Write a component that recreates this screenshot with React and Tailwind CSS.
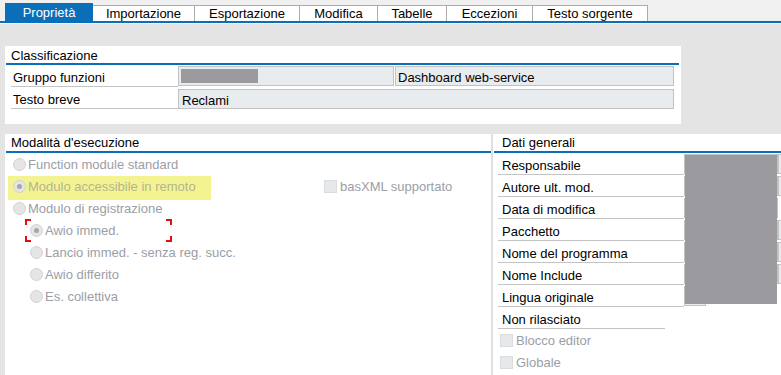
import React from "react";

const tabs = [
  { label: "Proprietà", w: "w-[88px]", active: true },
  { label: "Importazione", w: "w-[102px]" },
  { label: "Esportazione", w: "w-[105px]" },
  { label: "Modifica", w: "w-[78px]" },
  { label: "Tabelle", w: "w-[69px]" },
  { label: "Eccezioni", w: "w-[86px]" },
  { label: "Testo sorgente", w: "w-[115px]" },
];

function Radio({ checked }) {
  return (
    <span className="flex h-[13px] w-[13px] shrink-0 items-center justify-center rounded-full border border-[#d2d2d2] bg-[#e5e5e5]">
      {checked && <span className="h-[5px] w-[5px] rounded-full bg-[#a6a6a6]" />}
    </span>
  );
}

function Check() {
  return <span className="h-[13px] w-[13px] shrink-0 border border-[#dcdcdc] bg-[#e6e9ec]" />;
}

function RadioRow({ label, checked, indent }) {
  return (
    <div className={`flex h-[22px] items-center ${indent ? "pl-[25px]" : "pl-[8px]"}`}>
      <Radio checked={checked} />
      <span className="ml-[2px] text-[#9c9ea6]">{label}</span>
    </div>
  );
}

function InfoRow({ label, wide, extra }) {
  return (
    <div className="flex h-[22px]">
      <div className="ml-[5px] flex w-[186px] shrink-0 items-center border-b border-[#c4c4c4] pl-[4px] pt-[3px] text-black">
        {label}
      </div>
      <div
        className={`mt-[1px] h-[20px] shrink-0 border border-[#c2c2c2] bg-[#e9ecef] ${wide ? "w-[94px]" : "w-[22px]"}`}
      />
      {extra && <div className="mt-[1px] h-[20px] w-[20px] shrink-0 border border-[#c2c2c2] bg-[#e9ecef]" />}
    </div>
  );
}

export default function App() {
  return (
    <div
      className="h-[375px] w-[781px] overflow-hidden bg-[#e4e4e4] text-[13px] leading-none"
      style={{ fontFamily: '"Liberation Sans", Arial, sans-serif' }}
    >
      {/* Tab strip */}
      <div className="flex h-[21px] items-end bg-[#f0f0f0] pl-[5px]">
        {tabs.map((t) =>
          t.active ? (
            <div key={t.label} className={`flex h-[18px] items-center justify-center bg-[#0a6fb8] text-white ${t.w}`}>
              {t.label}
            </div>
          ) : (
            <div
              key={t.label}
              className={`flex h-[16px] items-center justify-center border-t border-r border-[#ababab] bg-white text-black ${t.w}`}
            >
              {t.label}
            </div>
          )
        )}
      </div>
      <div className="h-[2px] bg-[#0a6fb8]" />
      <div className="h-[1px] bg-[#f4f4f4]" />

      {/* Classificazione */}
      <div className="ml-[5px] mt-[22px] h-[78px] w-[676px] bg-white">
        <div className="flex h-[17px] items-center pl-[6px] pt-[1px] text-black">Classificazione</div>
        <div className="ml-[1px] mr-[2px] h-[2px] bg-[#0a6fb8]" />
        <div className="flex h-[22px]">
          <div className="ml-[6px] flex w-[167px] shrink-0 items-center border-b border-[#c4c4c4] pl-[2px] pt-[3px] text-black">
            Gruppo funzioni
          </div>
          <div className="mt-[1px] h-[20px] w-[216px] shrink-0 border border-[#c2c2c2] bg-[#e9ecef] pl-[2px] pt-[2px]">
            <div className="h-[14px] w-[77px] bg-[#9b9a9f]" />
          </div>
          <div className="ml-[1px] mt-[1px] flex h-[20px] w-[279px] shrink-0 items-center border border-[#c2c2c2] bg-[#e9ecef] pl-[2px] pt-[2px] text-black">
            Dashboard web-service
          </div>
        </div>
        <div className="flex h-[22px]">
          <div className="ml-[6px] flex w-[167px] shrink-0 items-center border-b border-[#c4c4c4] pl-[2px] pt-[3px] text-black">
            Testo breve
          </div>
          <div className="mt-[2px] flex h-[20px] w-[496px] shrink-0 items-center border border-[#c2c2c2] bg-[#e9ecef] pl-[3px] pt-[2px] text-black">
            Reclami
          </div>
        </div>
      </div>

      {/* Lower panels */}
      <div className="mt-[10px] flex h-[241px]">
        <div className="ml-[5px] w-[486px] shrink-0 bg-white">
          <div className="flex h-[17px] items-center pl-[6px] text-black">Modalità d'esecuzione</div>
          <div className="ml-[1px] h-[2px] bg-[#0a6fb8]" />
          <RadioRow label="Function module standard" />
          <div className="relative flex h-[22px] items-center pl-[8px]">
            <span className="absolute left-[3px] top-[1px] h-[24px] w-[203px] bg-[#f4f392]" />
            <div className="relative flex w-[311px] items-center">
              <Radio checked />
              <span className="ml-[2px] text-[#b4b58e]">Modulo accessibile in remoto</span>
            </div>
            <Check />
            <span className="ml-[3px] text-[#9c9ea6]">basXML supportato</span>
          </div>
          <RadioRow label="Modulo di registrazione" />
          <div className="relative">
            <RadioRow label="Awio immed." checked indent />
            <span className="absolute left-[20px] top-0 h-[6px] w-[6px] border-l-2 border-t-2 border-[#e01010]" />
            <span className="absolute left-[161px] top-0 h-[6px] w-[6px] border-r-2 border-t-2 border-[#e01010]" />
            <span className="absolute left-[20px] top-[17px] h-[6px] w-[6px] border-b-2 border-l-2 border-[#e01010]" />
            <span className="absolute left-[161px] top-[17px] h-[6px] w-[6px] border-b-2 border-r-2 border-[#e01010]" />
          </div>
          <RadioRow label="Lancio immed. - senza reg. succ." indent />
          <RadioRow label="Awio differito" indent />
          <RadioRow label="Es. collettiva" indent />
        </div>

        <div className="w-[2px] shrink-0 bg-[#e0e0e0]" />

        <div className="relative flex-1 overflow-hidden bg-white">
          <div className="flex h-[17px] items-center pl-[9px] text-black">Dati generali</div>
          <div className="ml-[1px] h-[2px] bg-[#0a6fb8]" />
          <InfoRow label="Responsabile" wide extra />
          <InfoRow label="Autore ult. mod." wide extra />
          <InfoRow label="Data di modifica" wide />
          <InfoRow label="Pacchetto" wide extra />
          <InfoRow label="Nome del programma" wide extra />
          <InfoRow label="Nome Include" wide extra />
          <InfoRow label="Lingua originale" />
          <div className="flex h-[22px]">
            <div className="ml-[5px] flex w-[167px] items-center border-b border-[#c4c4c4] pl-[4px] pt-[3px] text-black">
              Non rilasciato
            </div>
          </div>
          <div className="flex h-[22px] items-center pl-[7px]">
            <Check />
            <span className="ml-[3px] text-[#9c9ea6]">Blocco editor</span>
          </div>
          <div className="flex h-[22px] items-center pl-[7px]">
            <Check />
            <span className="ml-[3px] text-[#9c9ea6]">Globale</span>
          </div>
          <div className="absolute left-[192px] top-[21px] h-[149px] w-[92px] bg-[#9b9a9f]" />
        </div>
      </div>
    </div>
  );
}
